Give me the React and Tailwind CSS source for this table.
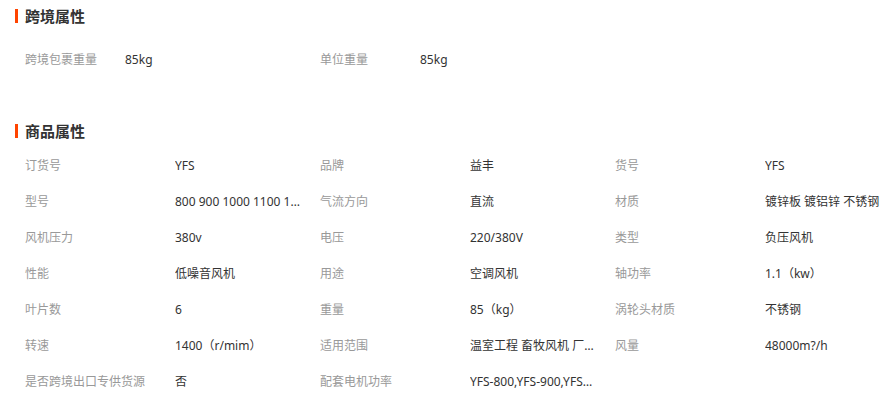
import React from "react";

const cross = [
  ["跨境包裹重量", "85kg"],
  ["单位重量", "85kg"],
];

const attrs = [
  ["订货号", "YFS"],
  ["品牌", "益丰"],
  ["货号", "YFS"],
  ["型号", "800 900 1000 1100 1200 1380"],
  ["气流方向", "直流"],
  ["材质", "镀锌板 镀铝锌 不锈钢"],
  ["风机压力", "380v"],
  ["电压", "220/380V"],
  ["类型", "负压风机"],
  ["性能", "低噪音风机"],
  ["用途", "空调风机"],
  ["轴功率", "1.1（kw）"],
  ["叶片数", "6"],
  ["重量", "85（kg）"],
  ["涡轮头材质", "不锈钢"],
  ["转速", "1400（r/mim）"],
  ["适用范围", "温室工程 畜牧风机 厂房通风降温"],
  ["风量", "48000m?/h"],
  ["是否跨境出口专供货源", "否"],
  ["配套电机功率", "YFS-800,YFS-900,YFS-1000"],
];

const Title = ({ children }) => (
  <div className="flex items-center h-[32px] pl-[15px]">
    <span className="w-[3px] h-[14px] bg-[#ff4400]" />
    <h3 className="ml-[7px] text-[15px] font-bold text-[#333]">{children}</h3>
  </div>
);

export default function App() {
  return (
    <div
      className="w-[892px] h-[394px] bg-white overflow-hidden text-[12px]"
      style={{ fontFamily: '"Noto Sans", "Noto Sans CJK SC", sans-serif' }}
    >
      <Title>跨境属性</Title>
      <div className="grid grid-cols-[295px_295px] pl-[25px] pt-[10px]">
        {cross.map(([k, v]) => (
          <div key={k} className="flex h-[36px] items-center">
            <span className="w-[100px] text-[#999]">{k}</span>
            <span className="text-[#333]">{v}</span>
          </div>
        ))}
      </div>
      <div className="h-[37px]" />
      <Title>商品属性</Title>
      <div className="grid grid-cols-[295px_295px_277px] pl-[25px] pt-[1px]">
        {attrs.map(([k, v]) => (
          <div key={k} className="flex h-[36px] items-center">
            <span className="w-[150px] shrink-0 text-[#999]">{k}</span>
            <span className="w-[125px] truncate text-[#333]">{v}</span>
          </div>
        ))}
      </div>
    </div>
  );
}
